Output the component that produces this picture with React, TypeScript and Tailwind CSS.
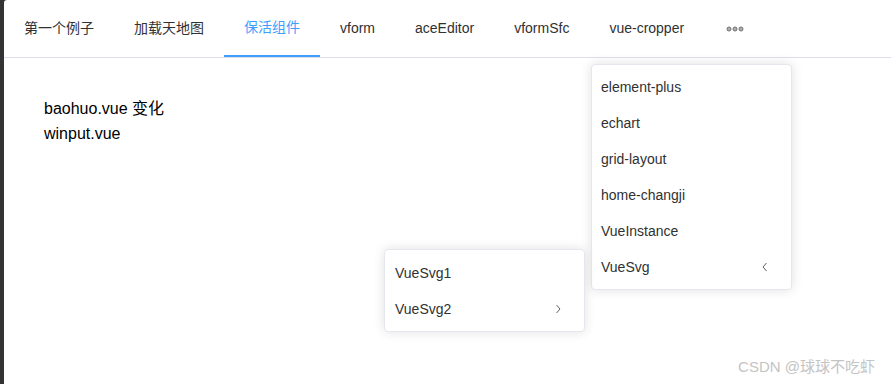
import React from "react";

const tabs = ["第一个例子", "加载天地图", "保活组件", "vform", "aceEditor", "vformSfc", "vue-cropper"];
const subMenu = ["element-plus", "echart", "grid-layout", "home-changji", "VueInstance"];

const font = { fontFamily: '"Liberation Sans", Arial, "Noto Sans CJK SC", sans-serif' };

function ChevronLeft() {
  return (
    <svg width="8" height="10" viewBox="0 0 8 10" fill="none">
      <path d="M5.5 1 L2 5 L5.5 9" stroke="#606266" strokeWidth="1" />
    </svg>
  );
}

function ChevronRight() {
  return (
    <svg width="8" height="10" viewBox="0 0 8 10" fill="none">
      <path d="M2.5 1 L6 5 L2.5 9" stroke="#606266" strokeWidth="1" />
    </svg>
  );
}

export default function App() {
  return (
    <div className="relative flex h-[384px] w-[891px] overflow-hidden bg-[#333]" style={font}>
      <div className="ml-[4px] flex flex-1 flex-col rounded-tl-[3px] bg-white">
        {/* top menu */}
        <div className="flex h-[58px] border-b border-[#dcdfe6]">
          {tabs.map((t) => (
            <div
              key={t}
              className={
                "flex h-[57px] items-center px-5 text-[14px] " +
                (t == "保活组件"
                  ? "border-b-2 border-[#409eff] text-[#409eff]"
                  : "text-[#303133]")
              }
            >
              {t}
            </div>
          ))}
          <div className="flex h-[57px] items-center pl-[22px]">
            <svg width="18" height="6" viewBox="0 0 18 6">
              <circle cx="3" cy="3" r="2" fill="#b0b0b0" stroke="#707070" strokeWidth="1" />
              <circle cx="9" cy="3" r="2" fill="#b0b0b0" stroke="#707070" strokeWidth="1" />
              <circle cx="15" cy="3" r="2" fill="#b0b0b0" stroke="#707070" strokeWidth="1" />
            </svg>
          </div>
        </div>

        {/* content */}
        <div className="pl-[40px] pt-[38px] text-[16px] leading-[25px] text-black">
          <p>baohuo.vue 变化</p>
          <p>winput.vue</p>
        </div>
      </div>

      {/* first popup */}
      <div className="absolute left-[591px] top-[64px] w-[201px] rounded-[4px] border border-[#e4e7ed] bg-white py-[4px] shadow-[0_0_12px_rgba(0,0,0,0.12)]">
        {subMenu.map((s) => (
          <div key={s} className="flex h-[36px] items-center px-[9px] text-[14px] text-[#303133]">
            {s}
          </div>
        ))}
        <div className="flex h-[36px] items-center justify-between pl-[9px] pr-[22px] text-[14px] text-[#303133]">
          <span>VueSvg</span>
          <ChevronLeft />
        </div>
      </div>

      {/* second popup */}
      <div className="absolute left-[384px] top-[249px] w-[201px] rounded-[4px] border border-[#e4e7ed] bg-white pb-[4px] pt-[5px] shadow-[0_0_12px_rgba(0,0,0,0.12)]">
        <div className="flex h-[36px] items-center px-[10px] text-[14px] text-[#303133]">VueSvg1</div>
        <div className="flex h-[36px] items-center justify-between pl-[10px] pr-[22px] text-[14px] text-[#303133]">
          <span>VueSvg2</span>
          <ChevronRight />
        </div>
      </div>

      <div className="absolute bottom-[6px] right-[16px] text-[15px] text-[#c4c4c4]">CSDN @球球不吃虾</div>
    </div>
  );
}
